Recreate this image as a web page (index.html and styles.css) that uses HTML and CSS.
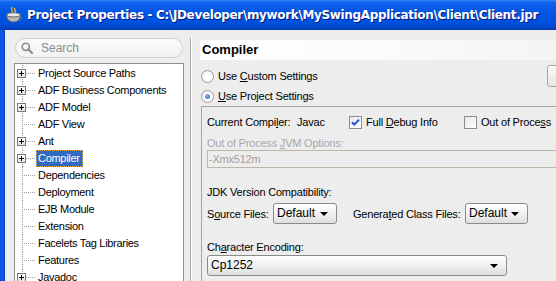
FILE: index.html
```html
<!DOCTYPE html>
<html>
<head>
<meta charset="utf-8">
<title>Project Properties</title>
<link rel="stylesheet" href="styles.css">
</head>
<body>
<div class="window">
  <div class="titlebar">
    <svg class="app-icon" width="18" height="18" viewBox="0 0 18 18">
      <path d="M7 1c-2 2 2 3 0 6" fill="none" stroke="#E8A030" stroke-width="1.5"/>
      <path d="M10 2c-2 2 2 3 0 5" fill="none" stroke="#F0C060" stroke-width="1.3"/>
      <ellipse cx="8.5" cy="9" rx="7" ry="2.2" fill="#E8E8E8" stroke="#707070" stroke-width="0.8"/>
      <path d="M1.5 9 Q2 16 8.5 16 Q15 16 15.5 9 Q15 11 8.5 11 Q2 11 1.5 9Z" fill="#B8B8B8" stroke="#606060" stroke-width="0.8"/>
      <path d="M15 10.5 q2.5 0 1.5 2.5 q-1 1.5 -3 1.5" fill="none" stroke="#707070" stroke-width="1"/>
    </svg>
    <span class="title-text">Project Properties - C:\JDeveloper\mywork\MySwingApplication\Client\Client.jpr</span>
  </div>
  <div class="main">
    <div class="left">
      <div class="search">
        <svg class="search-icon" width="12" height="12" viewBox="0 0 12 12">
          <circle cx="4.8" cy="4.8" r="3.6" fill="none" stroke="#8A8A8A" stroke-width="1.6"/>
          <path d="M7.5 7.5 L11 11" stroke="#8A8A8A" stroke-width="2" stroke-linecap="round"/>
        </svg>
        <span class="search-text">Search</span>
      </div>
      <div class="tree">
        <div class="row"><span class="gutter"><span class="exp"></span></span><span class="label">Project Source Paths</span></div>
        <div class="row"><span class="gutter"><span class="exp"></span></span><span class="label">ADF Business Components</span></div>
        <div class="row"><span class="gutter"><span class="exp"></span></span><span class="label">ADF Model</span></div>
        <div class="row"><span class="gutter"></span><span class="label">ADF View</span></div>
        <div class="row"><span class="gutter"><span class="exp"></span></span><span class="label">Ant</span></div>
        <div class="row"><span class="gutter"><span class="exp"></span></span><span class="label selected">Compiler</span></div>
        <div class="row"><span class="gutter"></span><span class="label">Dependencies</span></div>
        <div class="row"><span class="gutter"></span><span class="label">Deployment</span></div>
        <div class="row"><span class="gutter"></span><span class="label">EJB Module</span></div>
        <div class="row"><span class="gutter"></span><span class="label">Extension</span></div>
        <div class="row"><span class="gutter"></span><span class="label">Facelets Tag Libraries</span></div>
        <div class="row"><span class="gutter"></span><span class="label">Features</span></div>
        <div class="row"><span class="gutter"><span class="exp"></span></span><span class="label">Javadoc</span></div>
      </div>
    </div>
    <div class="divider"></div>
    <div class="right">
      <div class="header">Compiler</div>
      <div class="radio-row first">
        <span class="radio"></span><span class="radio-label">Use <u>C</u>ustom Settings</span>
        <span class="btn"></span>
      </div>
      <div class="radio-row">
        <span class="radio checked"><span class="dot"></span></span><span class="radio-label"><u>U</u>se Project Settings</span>
      </div>
      <div class="group">
        <div class="compiler-row">
          <span class="nw">Current Compi<u>l</u>er:</span>
          <span class="nw">Javac</span>
          <span class="check-item"><span class="checkbox checked"><svg width="11" height="11" viewBox="0 0 11 11"><path d="M2 5.2 L4.3 7.6 L9 2.6" fill="none" stroke="#2151C8" stroke-width="2"/></svg></span><span class="nw">Full <u>D</u>ebug Info</span></span>
          <span class="check-item"><span class="checkbox"></span><span class="nw">Out of Proce<u>s</u>s</span></span>
        </div>
        <div class="disabled-label">Out of Process <u>J</u>VM Options:</div>
        <div class="field">-Xmx512m</div>
        <div class="section-label">JDK Version Compatibility:</div>
        <div class="combo-row">
          <span class="lbl-src nw">S<u>o</u>urce Files:</span>
          <span class="combo combo-src">Default<span class="arrow"></span></span>
          <span class="lbl-gen nw">Genera<u>t</u>ed Class Files:</span>
          <span class="combo combo-gen">Default<span class="arrow"></span></span>
        </div>
        <div class="section-label enc-label">Ch<u>a</u>racter Encoding:</div>
        <div class="combo combo-enc">Cp1252<span class="arrow"></span></div>
      </div>
    </div>
  </div>
</div>
</body>
</html>
```
FILE: styles.css
```css
html, body {
  margin: 0;
  padding: 0;
}
body {
  width: 556px;
  height: 281px;
  overflow: hidden;
  background: #EDEDED;
  font-family: "Liberation Sans", Arial, sans-serif;
  font-size: 11px;
  color: #000;
}
.nw {
  white-space: nowrap;
}
.window {
  display: flex;
  flex-direction: column;
  width: 556px;
  height: 281px;
}
.titlebar {
  height: 30px;
  flex: none;
  display: flex;
  align-items: center;
  padding-left: 5px;
  gap: 4px;
  background: linear-gradient(#3A86F7 0px, #1066EE 2px, #0A5CE8 6px, #0055E3 14px, #0052DD 22px, #0047CC 27px, #003CB5 30px);
}
.app-icon {
  flex: none;
  margin-top: -1px;
}
.title-text {
  color: #fff;
  font-family: "DejaVu Sans", sans-serif;
  font-weight: bold;
  font-size: 12px;
  letter-spacing: -0.35px;
  white-space: nowrap;
  text-shadow: 1px 1px 0 #0A1A80;
}
.main {
  flex: 1;
  display: flex;
  border-left: 4px solid #0A56E0;
  box-shadow: inset 1px 0 0 #0844C0;
  overflow: hidden;
}
.left {
  flex: none;
  width: 176px;
  padding: 8px 0 0 10px;
}
.search {
  margin-left: 1px;
  width: 161px;
  height: 18px;
  border: 1px solid #D2D2D2;
  border-radius: 10px;
  background: linear-gradient(#FAFAFA, #F2F2F2);
  display: flex;
  align-items: center;
  padding-left: 5px;
}
.search-icon {
  flex: none;
}
.search-text {
  margin-left: 8px;
  color: #8C8C8C;
  font-size: 12px;
}
.tree {
  margin-top: 5px;
  width: 168px;
  height: 240px;
  border: 1px solid #8E8F8F;
  background: #fff;
  padding-top: 1px;
  overflow: hidden;
}
.row {
  display: flex;
  height: 17px;
  align-items: center;
}
.gutter {
  flex: none;
  position: relative;
  width: 21px;
  height: 17px;
  background-image:
    repeating-linear-gradient(to bottom, #A0A0A0 0 1px, transparent 1px 2px),
    repeating-linear-gradient(to right, #A0A0A0 0 1px, transparent 1px 2px);
  background-size: 1px 17px, 12px 1px;
  background-position: 7px 0, 9px 8px;
  background-repeat: no-repeat;
}
.exp {
  position: absolute;
  left: 2px;
  top: 4px;
  width: 7px;
  height: 7px;
  border: 1px solid #7A7A7A;
  background: linear-gradient(#fff, #E4E4E4);
}
.exp::before {
  content: "";
  position: absolute;
  left: 1px;
  top: 3px;
  width: 5px;
  height: 1px;
  background: #000;
}
.exp::after {
  content: "";
  position: absolute;
  left: 3px;
  top: 1px;
  width: 1px;
  height: 5px;
  background: #000;
}
.label {
  white-space: nowrap;
  border: 1px solid transparent;
  padding: 1px 2px 1px 1px;
  line-height: 13px;
  font-size: 11px;
  letter-spacing: -0.3px;
}
.label.selected {
  background: #316AC5;
  color: #fff;
  border: 1px dotted #F2B13A;
}
.divider {
  flex: none;
  width: 1px;
  margin-top: 8px;
  background: #A8A8A8;
  box-shadow: 1px 0 0 #fff;
}
.right {
  flex: none;
  width: 409px;
  padding-left: 9px;
}
.header {
  margin-top: 10px;
  height: 20px;
  line-height: 20px;
  padding-left: 2px;
  font-weight: bold;
  font-size: 13px;
  background: linear-gradient(to right, #FFFFFF, #FAFAFA 50%, #F2F2F2);
}
.radio-row {
  display: flex;
  align-items: center;
  height: 20px;
  padding-left: 1px;
  white-space: nowrap;
}
.radio-row.first {
  margin-top: 6px;
}
.radio {
  flex: none;
  width: 11px;
  height: 11px;
  border-radius: 50%;
  border: 1px solid #9A9A9A;
  background: radial-gradient(circle at 60% 60%, #FFFFFF 40%, #E6E6E6 100%);
  display: flex;
  align-items: center;
  justify-content: center;
}
.dot {
  width: 5px;
  height: 5px;
  border-radius: 50%;
  background: radial-gradient(circle at 35% 35%, #8DB4F2, #2A5FD0);
}
.radio-label {
  margin-left: 4px;
  font-size: 11px;
  letter-spacing: -0.2px;
}
.btn {
  margin-left: auto;
  width: 60px;
  height: 20px;
  border: 1px solid #A8A8A8;
  border-radius: 3px;
  background: linear-gradient(#FAFAFA, #E6E6E6);
}
.group {
  margin-left: 1px;
  border-top: 1px solid #A5A5A5;
  border-left: 1px solid #A5A5A5;
  height: 200px;
  padding-left: 5px;
  padding-top: 6px;
  font-size: 11px;
  letter-spacing: -0.2px;
}
.compiler-row {
  display: grid;
  grid-template-columns: 90px 52px 115px auto;
  height: 18px;
  align-items: center;
  white-space: nowrap;
}
.check-item {
  display: flex;
  align-items: center;
  white-space: nowrap;
}
.checkbox {
  flex: none;
  width: 11px;
  height: 11px;
  border: 1px solid #8E8E8E;
  background: linear-gradient(135deg, #E8E8E8, #FFFFFF);
  margin-right: 4px;
  display: flex;
  align-items: center;
  justify-content: center;
}
.disabled-label {
  margin-top: 5px;
  line-height: 14px;
  color: #A8A8A8;
  white-space: nowrap;
}
.field {
  height: 16px;
  line-height: 16px;
  border: 1px solid #B8B8A8;
  padding-left: 1px;
  color: #A0A0A0;
  background: #EDEDED;
}
.section-label {
  margin-top: 17px;
  line-height: 14px;
  white-space: nowrap;
}
.combo-row {
  margin-top: 4px;
  display: flex;
  align-items: center;
  height: 21px;
}
.combo {
  flex: none;
  position: relative;
  box-sizing: border-box;
  height: 21px;
  line-height: 19px;
  border: 1px solid #8A8A8A;
  border-radius: 3px;
  padding-left: 3px;
  background: linear-gradient(#FFFFFF, #F4F4F4 40%, #DEDEDE);
  font-size: 12px;
  letter-spacing: 0;
}
.arrow {
  position: absolute;
  right: 8px;
  top: 8px;
  width: 0;
  height: 0;
  border-left: 4px solid transparent;
  border-right: 4px solid transparent;
  border-top: 4px solid #000;
}
.lbl-src {
  flex: none;
  width: 66px;
}
.combo-src {
  width: 64px;
}
.lbl-gen {
  flex: none;
  margin-left: 16px;
  width: 112px;
}
.combo-gen {
  width: 63px;
}
.enc-label {
  margin-top: 16px;
}
.combo-enc {
  margin-top: 1px;
  width: 300px;
}
```
